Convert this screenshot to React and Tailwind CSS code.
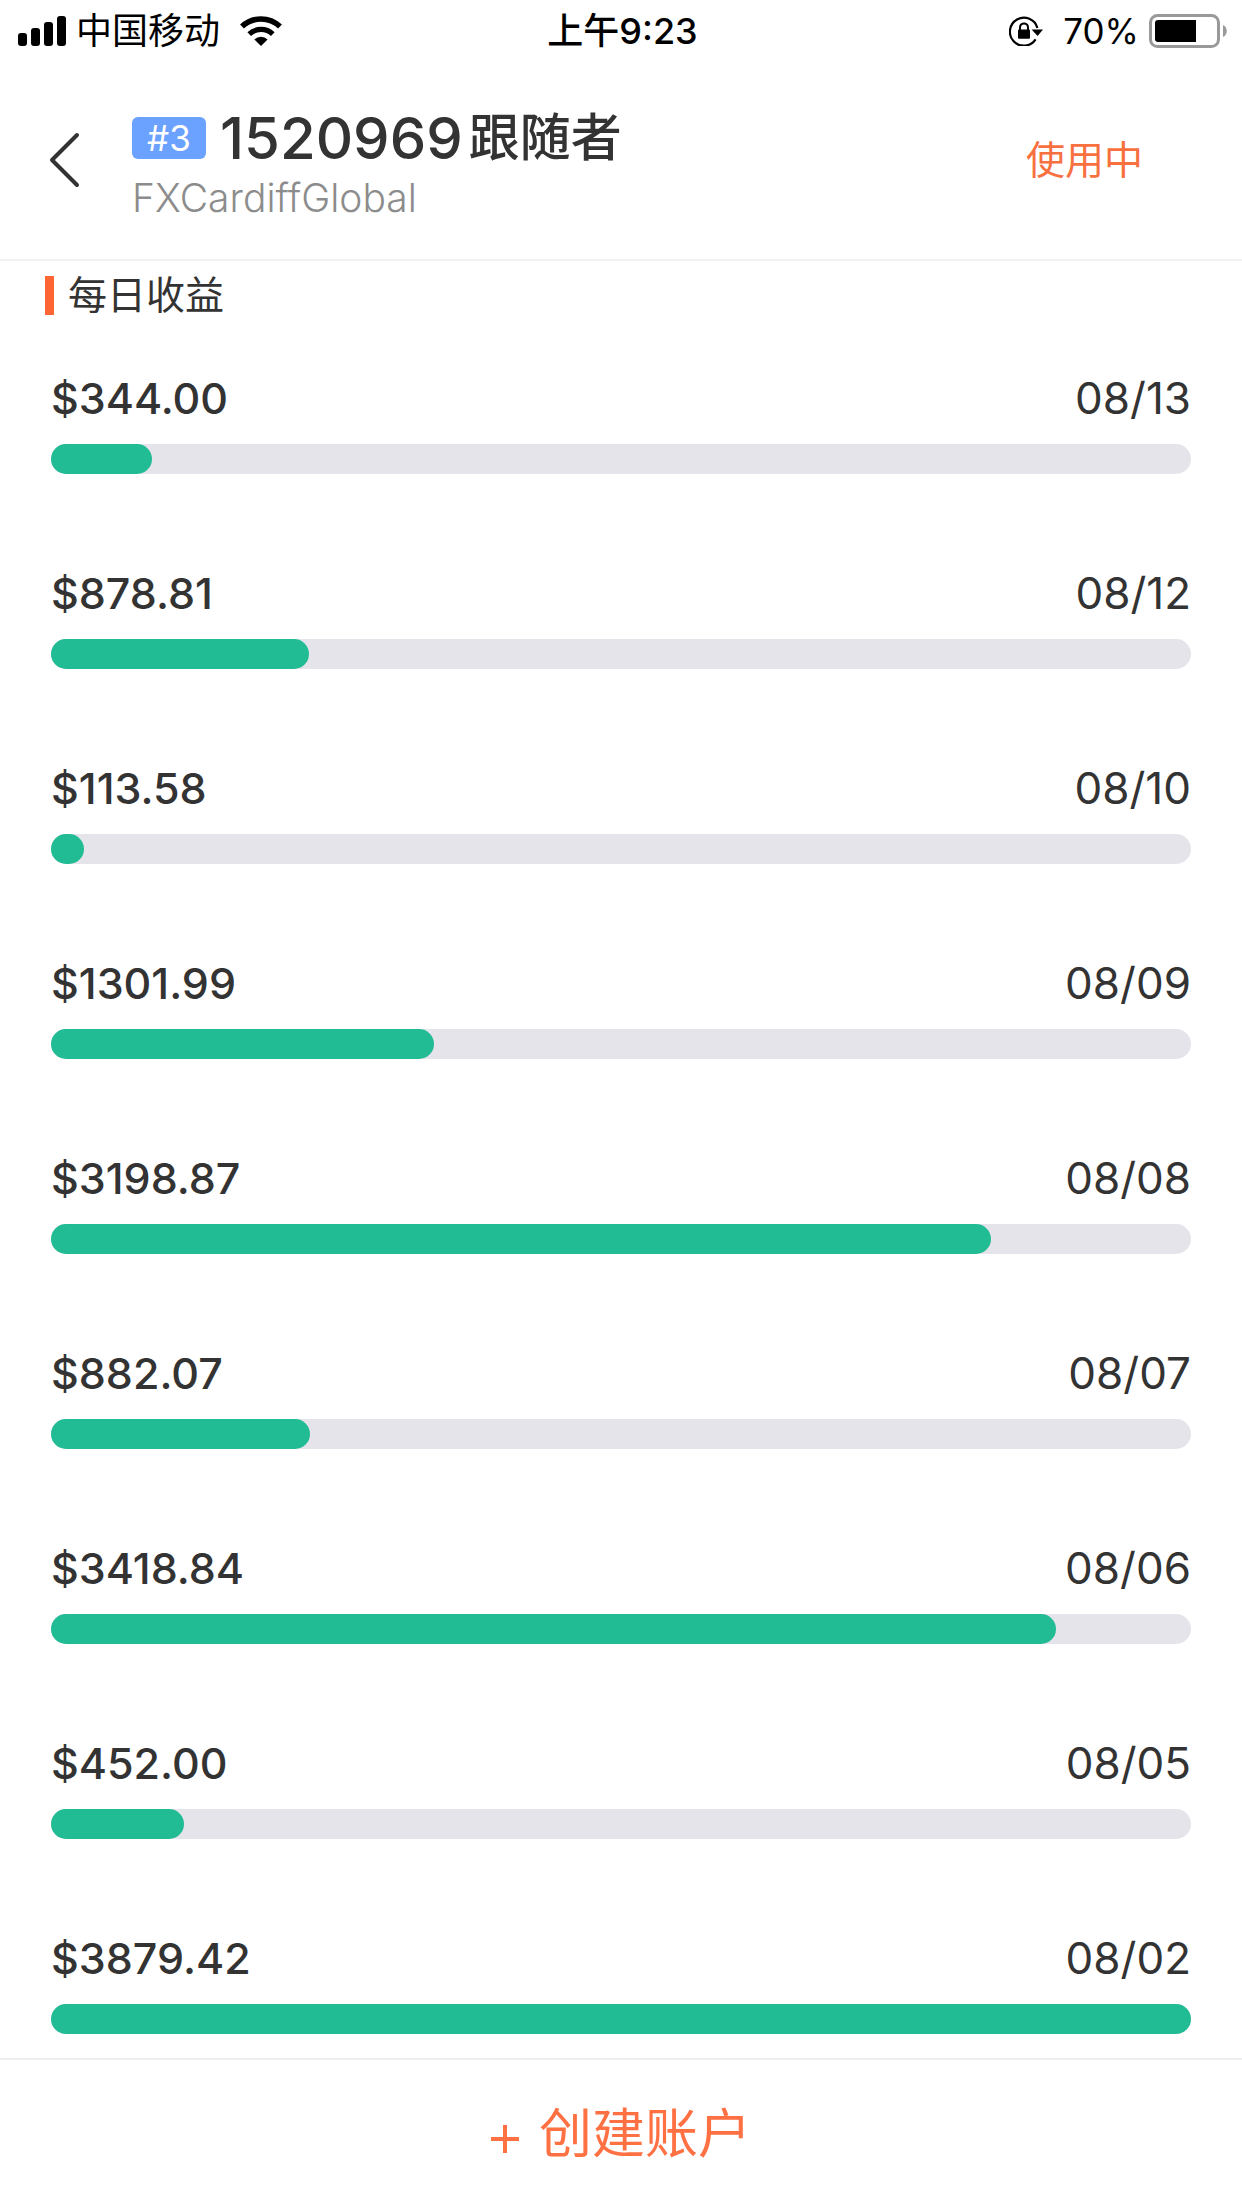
const dailyProfits = [
  { date: '08/13', amount: 344.0 },
  { date: '08/12', amount: 878.81 },
  { date: '08/10', amount: 113.58 },
  { date: '08/09', amount: 1301.99 },
  { date: '08/08', amount: 3198.87 },
  { date: '08/07', amount: 882.07 },
  { date: '08/06', amount: 3418.84 },
  { date: '08/05', amount: 452.0 },
  { date: '08/02', amount: 3879.42 },
];

const maxProfit = Math.max(...dailyProfits.map((item) => item.amount));

function SignalIcon() {
  return (
    <svg className="w-12 h-[30px]" viewBox="0 0 48 30" fill="currentColor" aria-hidden="true">
      <rect x="0" y="17" width="9" height="13" rx="3" />
      <rect x="13" y="12" width="9" height="18" rx="3" />
      <rect x="26" y="6" width="9" height="24" rx="3" />
      <rect x="39" y="0" width="9" height="30" rx="3" />
    </svg>
  );
}

function WifiIcon() {
  return (
    <svg className="w-[42px] h-[30px]" viewBox="0 0 42 30" fill="none" stroke="currentColor" aria-hidden="true">
      <path d="M2 10.6A27.5 27.5 0 0 1 40 10.6" strokeWidth="5.6" />
      <path d="M9.2 18.2A17 17 0 0 1 32.8 18.2" strokeWidth="5.2" />
      <path d="M14.4 23.4A9.4 9.4 0 0 1 27.6 23.4L21 30Z" fill="currentColor" stroke="none" />
    </svg>
  );
}

function RotationLockIcon() {
  return (
    <svg className="w-[34px] h-[30px]" viewBox="0 0 34 30" fill="none" stroke="currentColor" aria-hidden="true">
      <path d="M26.6 23.4A14 14 0 1 1 28.4 12" strokeWidth="2.2" />
      <path d="M22.6 13.4H34L28.6 20Z" fill="currentColor" stroke="none" />
      <rect x="9" y="13.4" width="12" height="9.4" rx="1" fill="currentColor" stroke="none" />
      <path d="M11 14V11.4A4 4 0 0 1 19 11.4V14" strokeWidth="2" />
    </svg>
  );
}

function BatteryIcon() {
  return (
    <svg className="w-[78px] h-[34px]" viewBox="0 0 78 34" aria-hidden="true">
      <rect x="1.5" y="1.5" width="68" height="31" rx="7" fill="none" stroke="#999" strokeWidth="3" />
      <path d="M74 11C79 13 79 21 74 23Z" fill="#999" />
      <path d="M9 6H47V28H9A3 3 0 0 1 6 25V9A3 3 0 0 1 9 6Z" fill="#000" />
    </svg>
  );
}

function StatusBar() {
  return (
    <div className="grid grid-cols-[1fr_auto_1fr] items-center h-15 pt-0.5 pl-[18px] pr-[15px] text-black text-[36px] leading-10">
      <div className="flex items-center">
        <SignalIcon />
        <span className="ml-2.5 mr-5">中国移动</span>
        <WifiIcon />
      </div>
      <span className="font-medium">上午9:23</span>
      <div className="flex items-center justify-end">
        <RotationLockIcon />
        <span className="ml-5 mr-2.5 text-[35px]">70%</span>
        <BatteryIcon />
      </div>
    </div>
  );
}

function AccountHeader() {
  return (
    <header className="flex items-center h-[201px] pl-11 pr-[99px] border-b-2 border-[#f2f2f2]">
      <button type="button" aria-label="返回" className="w-[88px] shrink-0">
        <svg className="w-9 h-14" viewBox="0 0 36 56" fill="none" stroke="currentColor" strokeWidth="4" strokeLinecap="round" strokeLinejoin="round">
          <path d="M33 3L8 28L33 53" />
        </svg>
      </button>
      <div className="flex-1 pt-2">
        <h1 className="flex items-center h-16">
          <span className="flex items-center justify-center w-[74px] h-[42px] rounded-md bg-[#6ba1ff] text-white text-[35px] leading-10">
            #3
          </span>
          <span className="ml-3.5 text-[58px] leading-16 font-medium">1520969</span>
          <span className="ml-1.5 text-[51px] leading-16 font-medium">跟随者</span>
        </h1>
        <p className="mt-1 text-[39px] leading-12 font-light text-[#8c8c8c]">FXCardiffGlobal</p>
      </div>
      <span className="text-[39px] leading-12 text-[#f9703f]">使用中</span>
    </header>
  );
}

function ProfitRow({ date, amount }) {
  return (
    <li>
      <div className="flex items-center justify-between leading-15">
        <span className="text-[43px] font-medium">${amount.toFixed(2)}</span>
        <time className="text-[44px]">{date}</time>
      </div>
      <div className="mt-4 h-[30px] rounded-full bg-[#e4e4ea]">
        <div
          className="h-full rounded-full bg-[#21bb94]"
          style={{ width: `${(amount / maxProfit) * 100}%` }}
        />
      </div>
    </li>
  );
}

export default function App() {
  return (
    <div className="flex flex-col min-h-screen bg-white text-[#333] font-['Inter','Noto_Sans_CJK_SC',sans-serif]">
      <StatusBar />
      <AccountHeader />

      <main className="flex-1 pt-3.5 pb-6">
        <h2 className="flex items-center pl-[45px] text-[39px] leading-10">
          <span className="w-[9px] h-[39px] mr-3.5 bg-[#ff6633]" />
          每日收益
        </h2>
        <ul className="mt-[53px] px-[51px] space-y-[89px]">
          {dailyProfits.map((item) => (
            <ProfitRow key={item.date} {...item} />
          ))}
        </ul>
      </main>

      <footer className="sticky bottom-0 border-t-2 border-[#eee] bg-white">
        <button type="button" className="flex items-center justify-center w-full h-37 text-[53px] leading-16 text-[#ff7043]">
          <svg className="w-7 h-7 mr-5 mt-2.5" viewBox="0 0 28 28" fill="none" stroke="currentColor" strokeWidth="4" aria-hidden="true">
            <path d="M14 0V28M0 14H28" />
          </svg>
          创建账户
        </button>
      </footer>
    </div>
  );
}
